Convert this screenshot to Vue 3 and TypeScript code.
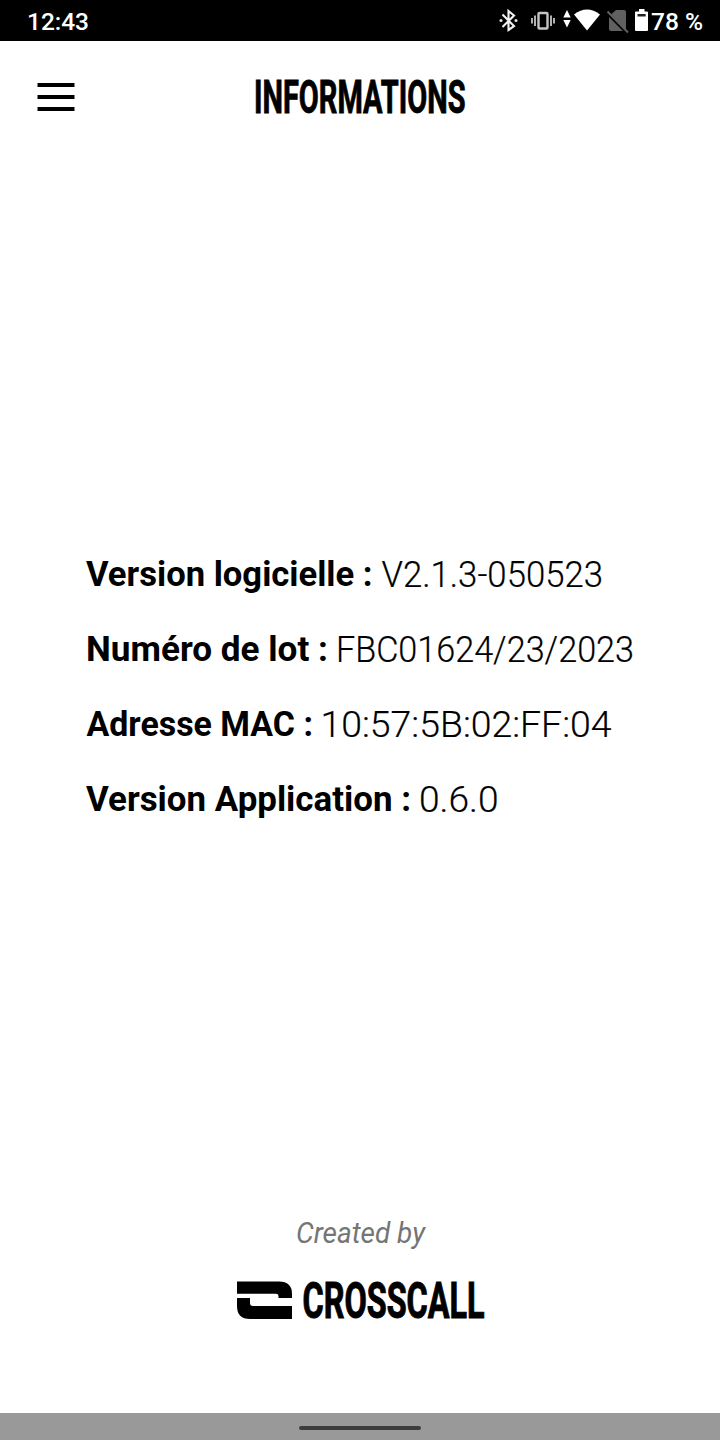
<script setup lang="ts">
interface InfoRow {
  label: string
  value: string
  labelX: number
  labelWidth: number
  valueX: number
  valueWidth: number
}

const rows: InfoRow[] = [
  { label: 'Version logicielle :', value: 'V2.1.3-050523', labelX: 86, labelWidth: 286.5, valueX: 381.5, valueWidth: 221.5 },
  { label: 'Numéro de lot :', value: 'FBC01624/23/2023', labelX: 86, labelWidth: 242, valueX: 336, valueWidth: 298 },
  { label: 'Adresse MAC :', value: '10:57:5B:02:FF:04', labelX: 86.5, labelWidth: 226.5, valueX: 320.5, valueWidth: 291 },
  { label: 'Version Application :', value: '0.6.0', labelX: 86, labelWidth: 325, valueX: 419, valueWidth: 79.5 },
]
</script>

<template>
  <div class="screen">
    <div class="status">
      <svg width="720" height="41" viewBox="0 0 720 41">
        <text x="27" y="30" class="status-text" textLength="62" lengthAdjust="spacingAndGlyphs">12:43</text>
        <g fill="none" stroke="#f2f2f2" stroke-width="2.1">
          <path d="M502.5 14.5 L514 26 L508.5 30 V11 L514 15.5 L502.5 27" />
        </g>
        <circle cx="501" cy="20.5" r="1.5" fill="#e8e8e8" />
        <circle cx="516" cy="20.5" r="1.5" fill="#e8e8e8" />
        <rect x="538.5" y="13" width="9" height="15.5" rx="1" fill="none" stroke="#c4c4c4" stroke-width="2.4" />
        <path d="M535 15.5V26 M532 18V23.500 M551 15.5V26 M554 18V23.500" stroke="#c4c4c4" stroke-width="1.8" />
        <path d="M563.300 17.500L567 10L570.700 17.500Z M563.300 20L567 27.500L570.700 20Z" fill="#fff" />
        <path d="M574 14.500Q587 4.500 600 14.500L587 30.500Z" fill="#fff" />
        <path d="M616 10H624Q626 10 626 12V30L611 14.500Z M609 17L623 31H611Q609 31 609 29Z" fill="#606060" />
        <path d="M607.500 11.500L628 32.500" stroke="#606060" stroke-width="2" />
        <path d="M639 9H644.500V11.500H647Q648 11.500 648 12.500V30Q648 31 647 31H636Q635 31 635 30V12.500Q635 11.500 636 11.500H639Z" fill="#fff" />
        <path d="M637.500 14H645.700V16.500H637.500Z" fill="#222" />
        <text x="651" y="30" class="status-text" textLength="52" lengthAdjust="spacingAndGlyphs">78 %</text>
      </svg>
    </div>

    <header class="header">
      <svg width="720" height="112" viewBox="0 41 720 112">
        <path d="M37.500 85H74.500M37.500 97H74.500M37.500 109H74.500" stroke="#000" stroke-width="4" />
        <text x="254" y="112.700" class="title" textLength="211.500" lengthAdjust="spacingAndGlyphs">INFORMATIONS</text>
      </svg>
    </header>

    <main class="info">
      <svg v-for="row in rows" :key="row.label" width="720" height="75" viewBox="0 0 720 75">
        <text :x="row.labelX" y="49.300" class="label" :textLength="row.labelWidth" lengthAdjust="spacingAndGlyphs">{{ row.label }}</text>
        <text :x="row.valueX" y="49.500" class="value" :textLength="row.valueWidth" lengthAdjust="spacingAndGlyphs">{{ row.value }}</text>
      </svg>
    </main>

    <footer class="footer">
      <svg width="720" height="140" viewBox="0 1200 720 140">
        <text x="296" y="1242.500" class="created" textLength="129" lengthAdjust="spacingAndGlyphs">Created by</text>
        <path d="M237 1281.500H279Q292 1281.500 292 1294V1298H278.500V1296Q278.500 1293.800 276 1293.800H237Z" />
        <path d="M237 1298H250V1303Q250 1306 253 1306H292V1319H250Q237 1319 237 1306Z" />
        <text x="302.500" y="1318" class="brand" textLength="182" lengthAdjust="spacingAndGlyphs">CROSSCALL</text>
      </svg>
    </footer>

    <div class="nav"><div class="handle"></div></div>
  </div>
</template>

<style scoped>
.screen {
  width: 720px;
  height: 1440px;
  display: flex;
  flex-direction: column;
  background: #fff;
  overflow: hidden;
  font-family: Roboto, "Liberation Sans", sans-serif;
}
svg {
  display: block;
}
.status {
  height: 41px;
  background: #000;
}
.status-text {
  font-size: 24px;
  font-weight: 500;
  fill: #fff;
}
.header {
  height: 112px;
}
.title {
  font-size: 46.5px;
  font-weight: 700;
  stroke: #000;
  stroke-width: 0.9px;
}
.info {
  margin-top: 384px;
  height: 300px;
}
.label {
  font-size: 35.5px;
  font-weight: 700;
}
.value {
  font-size: 36px;
  font-weight: 300;
  stroke: #000;
  stroke-width: 0.2px;
}
.footer {
  margin-top: 363px;
  height: 140px;
}
.created {
  font-size: 29px;
  font-style: italic;
  fill: #757575;
}
.brand {
  font-size: 50px;
  font-weight: 700;
  stroke: #000;
  stroke-width: 1px;
}
.nav {
  margin-top: auto;
  height: 27px;
  display: flex;
  justify-content: center;
  align-items: center;
  padding-top: 3px;
  box-sizing: border-box;
  background: #999;
}
.handle {
  width: 122px;
  height: 4px;
  border-radius: 2px;
  background: #3d3d3d;
}
</style>

<style>
body {
  margin: 0;
  background: #fff;
}
</style>
